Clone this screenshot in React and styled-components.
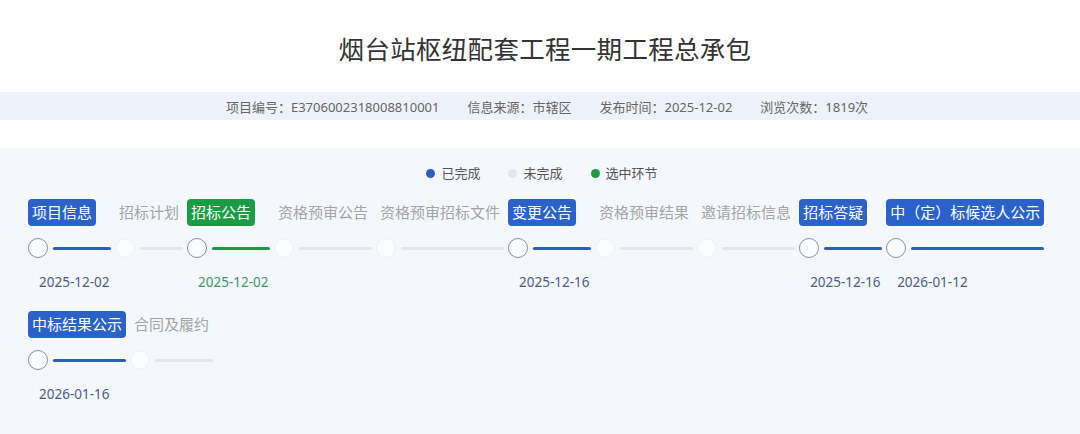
import React from "react";
import styled, { createGlobalStyle } from "styled-components";

const GlobalStyle = createGlobalStyle`
  html, body { margin: 0; padding: 0; background: #ffffff; }
  body {
    font-family: "Noto Sans", "Noto Sans CJK SC", sans-serif;
    -webkit-font-smoothing: antialiased;
  }
  * { box-sizing: border-box; }
`;

const Page = styled.div`
  width: 1080px;
  min-height: 434px;
  display: flex;
  flex-direction: column;
  background: #ffffff;
`;

const Header = styled.header`
  height: 92px;
  padding: 6px 0 0 10px;
  display: flex;
  justify-content: center;
`;

const Title = styled.h1`
  margin: 0;
  font-size: 25.5px;
  line-height: 86px;
  font-weight: 400;
  color: #333333;
  letter-spacing: 0.3px;
`;

const MetaBar = styled.div`
  height: 28px;
  margin-bottom: 28px;
  padding-left: 14px;
  background: #eef2fa;
  display: flex;
  justify-content: center;
  align-items: center;
  gap: 28px;
  font-size: 13px;
  color: #666666;
`;

const MetaItem = styled.span`
  white-space: nowrap;
`;

const Panel = styled.section`
  flex: 1;
  background: #f4f8fd;
  padding: 15px 28px 20px;
`;

const Legend = styled.div`
  display: flex;
  justify-content: center;
  gap: 28px;
  padding-left: 4px;
  height: 20px;
  margin-bottom: 16px;
`;

const LegendItem = styled.span`
  display: flex;
  align-items: center;
  gap: 6px;
  font-size: 13px;
  line-height: 20px;
  color: #555555;
`;

const Dot = styled.i`
  width: 9px;
  height: 9px;
  border-radius: 50%;
  background: ${(p) => p.$color};
`;

const StepRows = styled.div`
  display: flex;
  flex-direction: column;
  gap: 19px;
`;

const StepRow = styled.div`
  display: flex;
  gap: 4px;
  align-items: flex-start;
`;

const Step = styled.div`
  display: flex;
  flex-direction: column;
  flex-shrink: 0;
`;

const labelStyles = {
  done: "background: #2a62c9; color: #ffffff;",
  current: "background: #1b9b46; color: #ffffff;",
  todo: "background: transparent; color: #a4a4a4;",
};

const Label = styled.span`
  align-self: flex-start;
  margin-right: ${(p) => p.$extra}px;
  height: 27px;
  line-height: 27px;
  padding: 0 4px;
  border-radius: 4px;
  font-size: 15px;
  white-space: nowrap;
  ${(p) => labelStyles[p.$variant]}
`;

const Track = styled.div`
  display: flex;
  align-items: center;
  height: 20px;
  margin-top: 12px;
`;

const Circle = styled.span`
  flex-shrink: 0;
  width: 20px;
  height: 20px;
  border-radius: 50%;
  border: 1px solid ${(p) => (p.$ghost ? "#ebeef3" : "#8b9098")};
  background: ${(p) => (p.$ghost ? "#f9fbfe" : "#fbfcfe")};
`;

const lineColors = { done: "#2c5dba", current: "#1f9a42", todo: "#e2e5ea" };

const Line = styled.span`
  flex: 1;
  height: 3px;
  margin-left: 5px;
  border-radius: 2px;
  background: ${(p) => lineColors[p.$variant]};
`;

const DateText = styled.span`
  height: 20px;
  margin-top: 14px;
  margin-left: 11px;
  font-size: 13.5px;
  line-height: 20px;
  color: ${(p) => (p.$variant === "current" ? "#3d9a60" : "#4b5d7d")};
  white-space: nowrap;
`;

const rows = [
  [
    { name: "项目信息", state: "done", date: "2025-12-02", extra: 15 },
    { name: "招标计划", state: "todo" },
    { name: "招标公告", state: "current", date: "2025-12-02", extra: 15 },
    { name: "资格预审公告", state: "todo" },
    { name: "资格预审招标文件", state: "todo" },
    { name: "变更公告", state: "done", date: "2025-12-16", extra: 15 },
    { name: "资格预审结果", state: "todo" },
    { name: "邀请招标信息", state: "todo" },
    { name: "招标答疑", state: "done", date: "2025-12-16", extra: 15 },
    { name: "中（定）标候选人公示", state: "done", date: "2026-01-12" },
  ],
  [
    { name: "中标结果公示", state: "done", date: "2026-01-16" },
    { name: "合同及履约", state: "todo" },
  ],
];

export default function App() {
  return (
    <Page>
      <GlobalStyle />
      <Header>
        <Title>烟台站枢纽配套工程一期工程总承包</Title>
      </Header>
      <MetaBar>
        <MetaItem>项目编号：E3706002318008810001</MetaItem>
        <MetaItem>信息来源：市辖区</MetaItem>
        <MetaItem>发布时间：2025-12-02</MetaItem>
        <MetaItem>浏览次数：1819次</MetaItem>
      </MetaBar>
      <Panel>
        <Legend>
          <LegendItem>
            <Dot $color="#2a5cc4" />
            已完成
          </LegendItem>
          <LegendItem>
            <Dot $color="#e3e6eb" />
            未完成
          </LegendItem>
          <LegendItem>
            <Dot $color="#1d9c42" />
            选中环节
          </LegendItem>
        </Legend>
        <StepRows>
          {rows.map((row, i) => (
            <StepRow key={i}>
              {row.map((s) => (
                <Step key={s.name}>
                  <Label $variant={s.state} $extra={s.extra || 0}>
                    {s.name}
                  </Label>
                  <Track>
                    <Circle $ghost={s.state === "todo"} />
                    <Line $variant={s.state} />
                  </Track>
                  <DateText $variant={s.state}>{s.date || ""}</DateText>
                </Step>
              ))}
            </StepRow>
          ))}
        </StepRows>
      </Panel>
    </Page>
  );
}
